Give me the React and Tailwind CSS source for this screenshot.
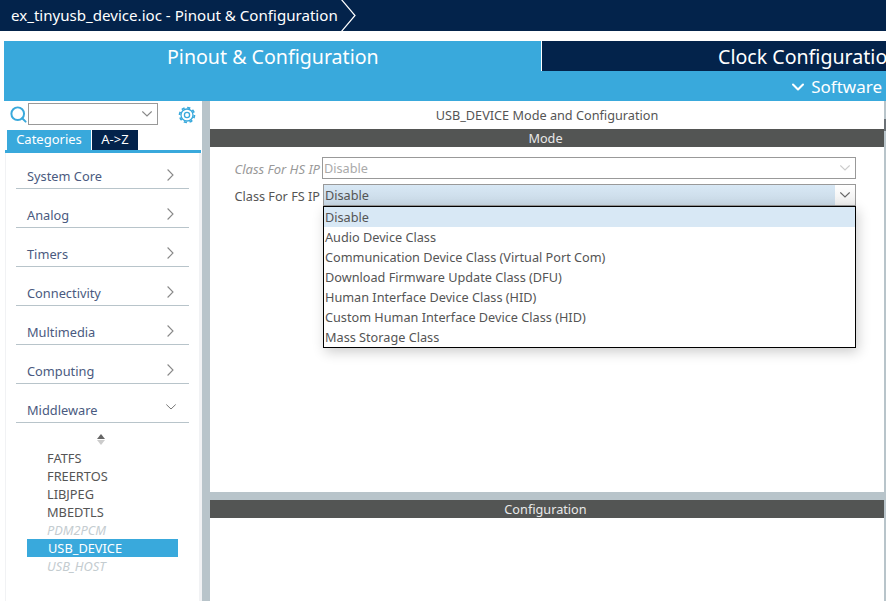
import { ChevronDown, Search } from "lucide-react";

const categories = ["System Core", "Analog", "Timers", "Connectivity", "Multimedia", "Computing"];

const middleware = [
  { name: "FATFS" },
  { name: "FREERTOS" },
  { name: "LIBJPEG" },
  { name: "MBEDTLS" },
  { name: "PDM2PCM", disabled: true },
  { name: "USB_DEVICE", selected: true },
  { name: "USB_HOST", disabled: true },
];

const options = [
  "Disable",
  "Audio Device Class",
  "Communication Device Class (Virtual Port Com)",
  "Download Firmware Update Class (DFU)",
  "Human Interface Device Class (HID)",
  "Custom Human Interface Device Class (HID)",
  "Mass Storage Class",
];

export default function App() {
  return (
    <div className="h-[601px] w-[886px] overflow-hidden bg-white font-['Noto_Sans',sans-serif] text-[12.7px] text-[#555]">
      <TopBar />
      <div className="pl-1 pt-2.5">
        <Tabs />
        <div className="flex h-[500px]">
          <Sidebar />
          <div className="w-2 bg-[#b8c4ca]" />
          <Content />
          <div className="w-[2px] bg-[#b8c4ca] pt-[18px]">
            <div className="h-[12px] bg-[#6b7176]" />
          </div>
        </div>
      </div>
    </div>
  );
}

function TopBar() {
  return (
    <div className="flex h-[31px] items-center bg-[#03234b] pl-[11px] text-[15.1px] leading-[31px] text-white">
      <span>ex_tinyusb_device.ioc - Pinout &amp; Configuration</span>
      <svg className="ml-[2px]" width="18" height="31" viewBox="0 0 18 31" fill="none">
        <path d="M1 -1 L15 15.5 L1 32" stroke="#fff" strokeWidth="1.2" />
      </svg>
    </div>
  );
}

function Tabs() {
  return (
    <div className="bg-[#39a9dc] text-white">
      <div className="flex h-[30px]">
        <div className="w-[537px] pl-[163px] text-[19.6px] leading-[32px]">Pinout &amp; Configuration</div>
        <div className="w-px bg-white" />
        <div className="flex-1 overflow-hidden whitespace-nowrap bg-[#03234b] pl-[176px] text-[19.6px] leading-[32px]">
          Clock Configuration
        </div>
      </div>
      <div className="flex h-[30px] items-center justify-end gap-[3px] pr-[4px] pt-[2px] text-[17px]">
        <ChevronDown size={20} strokeWidth={2.5} />
        <span>Software</span>
      </div>
    </div>
  );
}

function Chevron({ className, strokeWidth = 1.2 }) {
  return (
    <svg className={className} width="10" height="6" viewBox="0 0 10 6" fill="none">
      <path d="M0.3 0.5 L5 5 L9.7 0.5" stroke="currentColor" strokeWidth={strokeWidth} />
    </svg>
  );
}

function GearIcon() {
  return (
    <svg className="ml-[20px] mt-[3px]" width="18" height="18" viewBox="0 0 18 18" fill="none" stroke="#39a9dc">
      <circle cx="9" cy="9" r="6" strokeWidth="1.3" />
      <circle cx="9" cy="9" r="7.4" strokeWidth="1.8" strokeDasharray="3.2 2.6" />
      <circle cx="9" cy="9" r="2.6" strokeWidth="1.3" />
    </svg>
  );
}

function Sidebar() {
  return (
    <div className="flex w-[198px] flex-col bg-white">
      <div className="flex h-[29px] items-start pl-[5px] pt-[2px]">
        <Search size={19} strokeWidth={2.5} className="mt-[2px] text-[#39a9dc]" />
        <div className="flex h-[22px] w-[130px] items-center justify-end border border-[#999] pr-[5px]">
          <Chevron className="text-[#888]" />
        </div>
        <GearIcon />
      </div>
      <div className="flex h-[20px] pl-[3px]">
        <div className="w-[84px] bg-[#39a9dc] text-center text-[13px] leading-[19px] text-white">Categories</div>
        <div className="ml-px w-[46px] bg-[#03234b] text-center text-[13px] leading-[19px] text-white">A-&gt;Z</div>
      </div>
      <div className="mx-px h-[3px] bg-[#39a9dc]" />
      <div className="ml-px flex-1 border-l border-r-[3px] border-l-[#f1f2f4] border-r-[#f1f2f4]">
        <div className="-mt-[3px]">
          {categories.map((name) => (
            <CategoryRow key={name} name={name} />
          ))}
          <CategoryRow name="Middleware" open />
        </div>
        <div className="flex h-[26px] flex-col items-center justify-center pr-[4px] pt-[7px]">
          <div className="h-0 w-0 border-x-[4px] border-b-[5px] border-x-transparent border-b-[#666]" />
          <div className="mt-px h-0 w-0 border-x-[4px] border-t-[5px] border-x-transparent border-t-[#ccc]" />
        </div>
        <div className="pl-[21px]">
          {middleware.map((item) => (
            <div
              key={item.name}
              className={`h-[18px] w-[151px] text-[12.8px] leading-[18px] ${
                item.selected
                  ? "bg-[#39a9dc] pl-[21px] text-white"
                  : item.disabled
                    ? "pl-[20px] italic text-[#c4ccd0]"
                    : "pl-[20px] text-[#555]"
              }`}
            >
              {item.name}
            </div>
          ))}
        </div>
      </div>
    </div>
  );
}

function CategoryRow({ name, open }) {
  return (
    <div className={`mx-[10px] flex h-[39px] items-end justify-between border-b border-[#b8c4ca] pb-[3px] pl-[11px] text-[12.8px] text-[#4a5a80] ${open ? "pr-[13px]" : "pr-[15px]"}`}>
      <span className="leading-[18px]">{name}</span>
      {open ? (
        <Chevron className="mb-[9px] text-[#777]" strokeWidth={1} />
      ) : (
        <svg className="mb-[4px] text-[#888]" width="7" height="12" viewBox="0 0 7 12" fill="none">
          <path d="M0.6 0.5 L6 6 L0.6 11.5" stroke="currentColor" strokeWidth="1.1" />
        </svg>
      )}
    </div>
  );
}

function Content() {
  return (
    <div className="flex flex-1 flex-col">
      <div className="h-[28px] text-center leading-[29px]">USB_DEVICE Mode and Configuration</div>
      <SectionTitle>Mode</SectionTitle>
      <div className="h-[345px] pt-[10px]">
        <div className="flex h-[22px] items-center">
          <div className="w-[112px] pr-[2px] pt-[1px] text-right text-[13px] italic leading-[22px] text-[#999]">Class For HS IP</div>
          <div className="flex h-[22px] w-[534px] items-center justify-between border border-[#999] pl-[1px] pr-[5px] text-[#aaa]">
            <span className="pt-[1px]">Disable</span>
            <Chevron className="text-[#ccc]" />
          </div>
        </div>
        <div className="relative mt-[5px] flex h-[22px] items-center">
          <div className="w-[113px] pr-[3px] pt-[1px] text-right text-[12.7px] leading-[22px]">Class For FS IP</div>
          <div className="flex h-[22px] w-[533px] items-center border border-[#999]">
            <div className="h-full flex-1 bg-gradient-to-b from-[#d8e8f5] to-[#c8d8e5] pl-[1px] leading-[20px]">Disable</div>
            <div className="flex h-full w-[20px] items-center justify-center bg-gradient-to-b from-white to-[#eee]">
              <Chevron className="text-[#666]" />
            </div>
          </div>
          <div className="absolute left-[113px] top-[22px] w-[533px] border border-black bg-white shadow-[2px_4px_12px_rgba(0,0,0,0.2)]">
            {options.map((opt, i) => (
              <div key={opt} className={`h-[20px] pl-[1px] leading-[20px] ${i === 0 ? "bg-[#d8e8f5]" : ""}`}>
                {opt}
              </div>
            ))}
          </div>
        </div>
      </div>
      <div className="h-[8px] bg-[#b8c4ca]" />
      <SectionTitle>Configuration</SectionTitle>
    </div>
  );
}

function SectionTitle({ children }) {
  return <div className="h-[18px] bg-[#535554] pr-[3px] text-center leading-[18px] text-[#e8e8e8]">{children}</div>;
}
